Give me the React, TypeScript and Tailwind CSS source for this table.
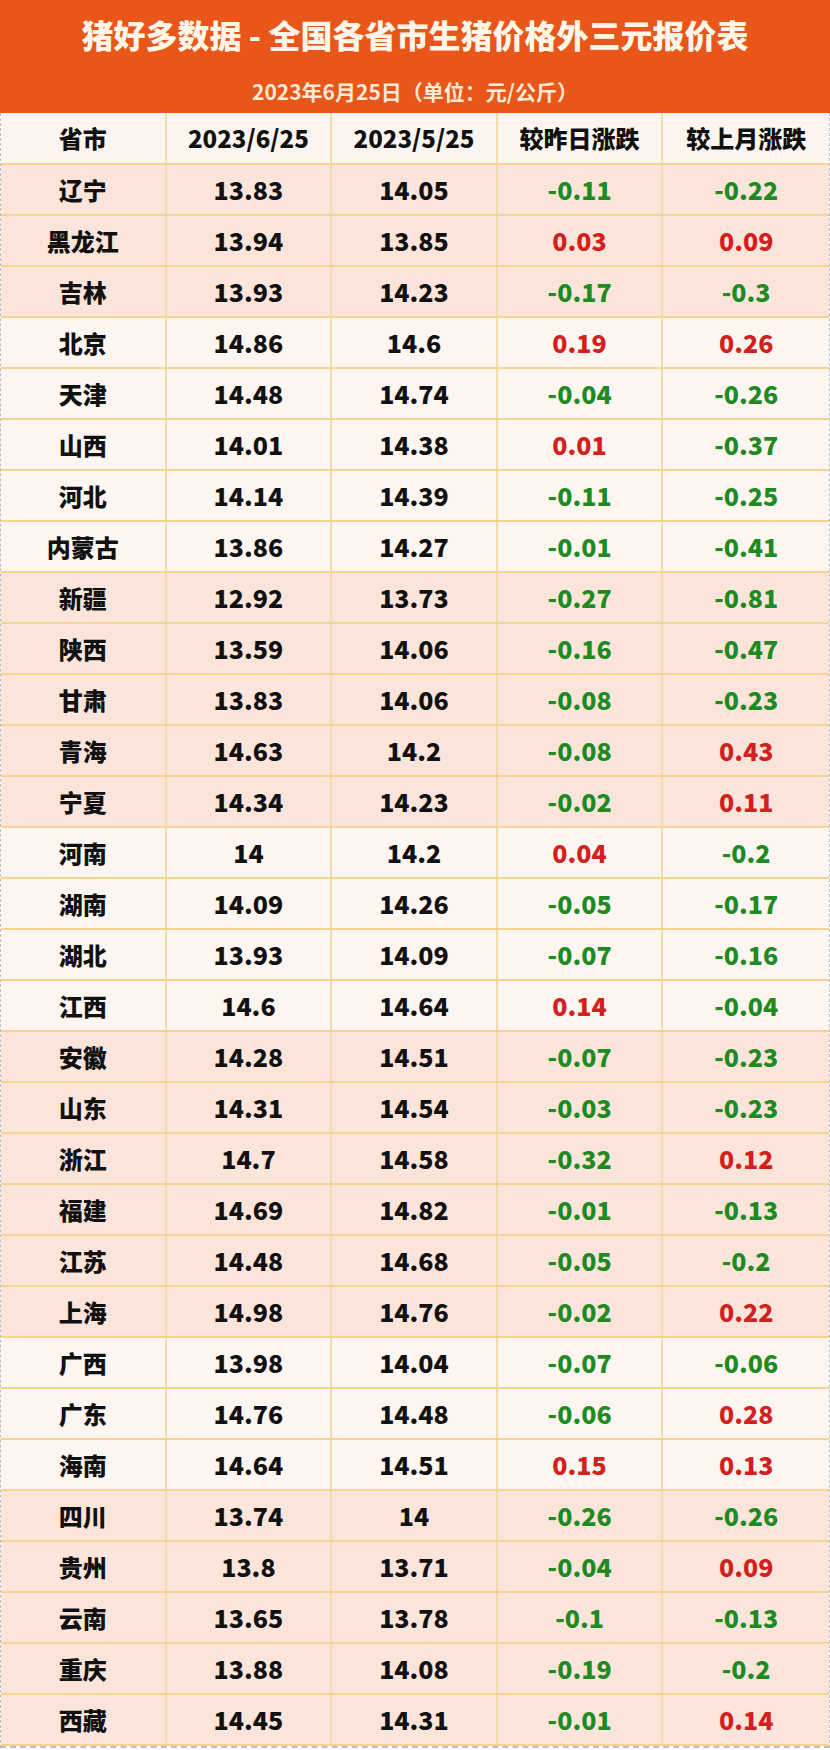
import React from "react";

type Row = [string, string, string, string, string, boolean];

const rows: Row[] = [
  ["辽宁", "13.83", "14.05", "-0.11", "-0.22", true],
  ["黑龙江", "13.94", "13.85", "0.03", "0.09", true],
  ["吉林", "13.93", "14.23", "-0.17", "-0.3", true],
  ["北京", "14.86", "14.6", "0.19", "0.26", false],
  ["天津", "14.48", "14.74", "-0.04", "-0.26", false],
  ["山西", "14.01", "14.38", "0.01", "-0.37", false],
  ["河北", "14.14", "14.39", "-0.11", "-0.25", false],
  ["内蒙古", "13.86", "14.27", "-0.01", "-0.41", false],
  ["新疆", "12.92", "13.73", "-0.27", "-0.81", true],
  ["陕西", "13.59", "14.06", "-0.16", "-0.47", true],
  ["甘肃", "13.83", "14.06", "-0.08", "-0.23", true],
  ["青海", "14.63", "14.2", "-0.08", "0.43", true],
  ["宁夏", "14.34", "14.23", "-0.02", "0.11", true],
  ["河南", "14", "14.2", "0.04", "-0.2", false],
  ["湖南", "14.09", "14.26", "-0.05", "-0.17", false],
  ["湖北", "13.93", "14.09", "-0.07", "-0.16", false],
  ["江西", "14.6", "14.64", "0.14", "-0.04", false],
  ["安徽", "14.28", "14.51", "-0.07", "-0.23", true],
  ["山东", "14.31", "14.54", "-0.03", "-0.23", true],
  ["浙江", "14.7", "14.58", "-0.32", "0.12", true],
  ["福建", "14.69", "14.82", "-0.01", "-0.13", true],
  ["江苏", "14.48", "14.68", "-0.05", "-0.2", true],
  ["上海", "14.98", "14.76", "-0.02", "0.22", true],
  ["广西", "13.98", "14.04", "-0.07", "-0.06", false],
  ["广东", "14.76", "14.48", "-0.06", "0.28", false],
  ["海南", "14.64", "14.51", "0.15", "0.13", false],
  ["四川", "13.74", "14", "-0.26", "-0.26", true],
  ["贵州", "13.8", "13.71", "-0.04", "0.09", true],
  ["云南", "13.65", "13.78", "-0.1", "-0.13", true],
  ["重庆", "13.88", "14.08", "-0.19", "-0.2", true],
  ["西藏", "14.45", "14.31", "-0.01", "0.14", true],
];

const font = { fontFamily: '"Noto Sans CJK SC", "Noto Sans", sans-serif' };

function Change({ v }: { v: string }) {
  const neg = v.startsWith("-");
  return (
    <span className={neg ? "text-[#1f8a1f]" : "text-[#d1201d]"}>{v}</span>
  );
}

function Cell({ children, last }: { children: React.ReactNode; last?: boolean }) {
  return (
    <div
      className={
        "flex items-center justify-center " +
        (last ? "" : "border-r-2 border-[#f2dcae]")
      }
    >
      {children}
    </div>
  );
}

export default function App() {
  return (
    <div className="w-[830px] h-[1750px] bg-white" style={font}>
      <div className="h-[113px] bg-[#e8561a] flex flex-col items-center">
        <div className="mt-[12px] text-[32px] leading-[44px] font-black text-[#fff6e8]">
          猪好多数据 - 全国各省市生猪价格外三元报价表
        </div>
        <div className="mt-[21px] text-[21px] leading-[28px] font-bold text-[#fde9d6]">
          2023年6月25日（单位：元/公斤）
        </div>
      </div>
      <div className="border-x border-b-2 border-dashed border-[#bdbdbd]">
        <div className="grid grid-cols-5 h-[52px] bg-[#fcf5ef] border-b-2 border-[#f5d394] text-[24px] font-black text-[#111]">
          <Cell>省市</Cell>
          <Cell>2023/6/25</Cell>
          <Cell>2023/5/25</Cell>
          <Cell>较昨日涨跌</Cell>
          <Cell last>较上月涨跌</Cell>
        </div>
        {rows.map((r) => (
          <div
            key={r[0]}
            className={
              "grid grid-cols-5 h-[51px] border-b-2 border-[#f5d394] text-[25px] font-black text-[#111] " +
              (r[5] ? "bg-[#fbe5db]" : "bg-[#fdf5f0]")
            }
          >
            <Cell>
              <span className="text-[24px]">{r[0]}</span>
            </Cell>
            <Cell>{r[1]}</Cell>
            <Cell>{r[2]}</Cell>
            <Cell>
              <Change v={r[3]} />
            </Cell>
            <Cell last>
              <Change v={r[4]} />
            </Cell>
          </div>
        ))}
      </div>
    </div>
  );
}
